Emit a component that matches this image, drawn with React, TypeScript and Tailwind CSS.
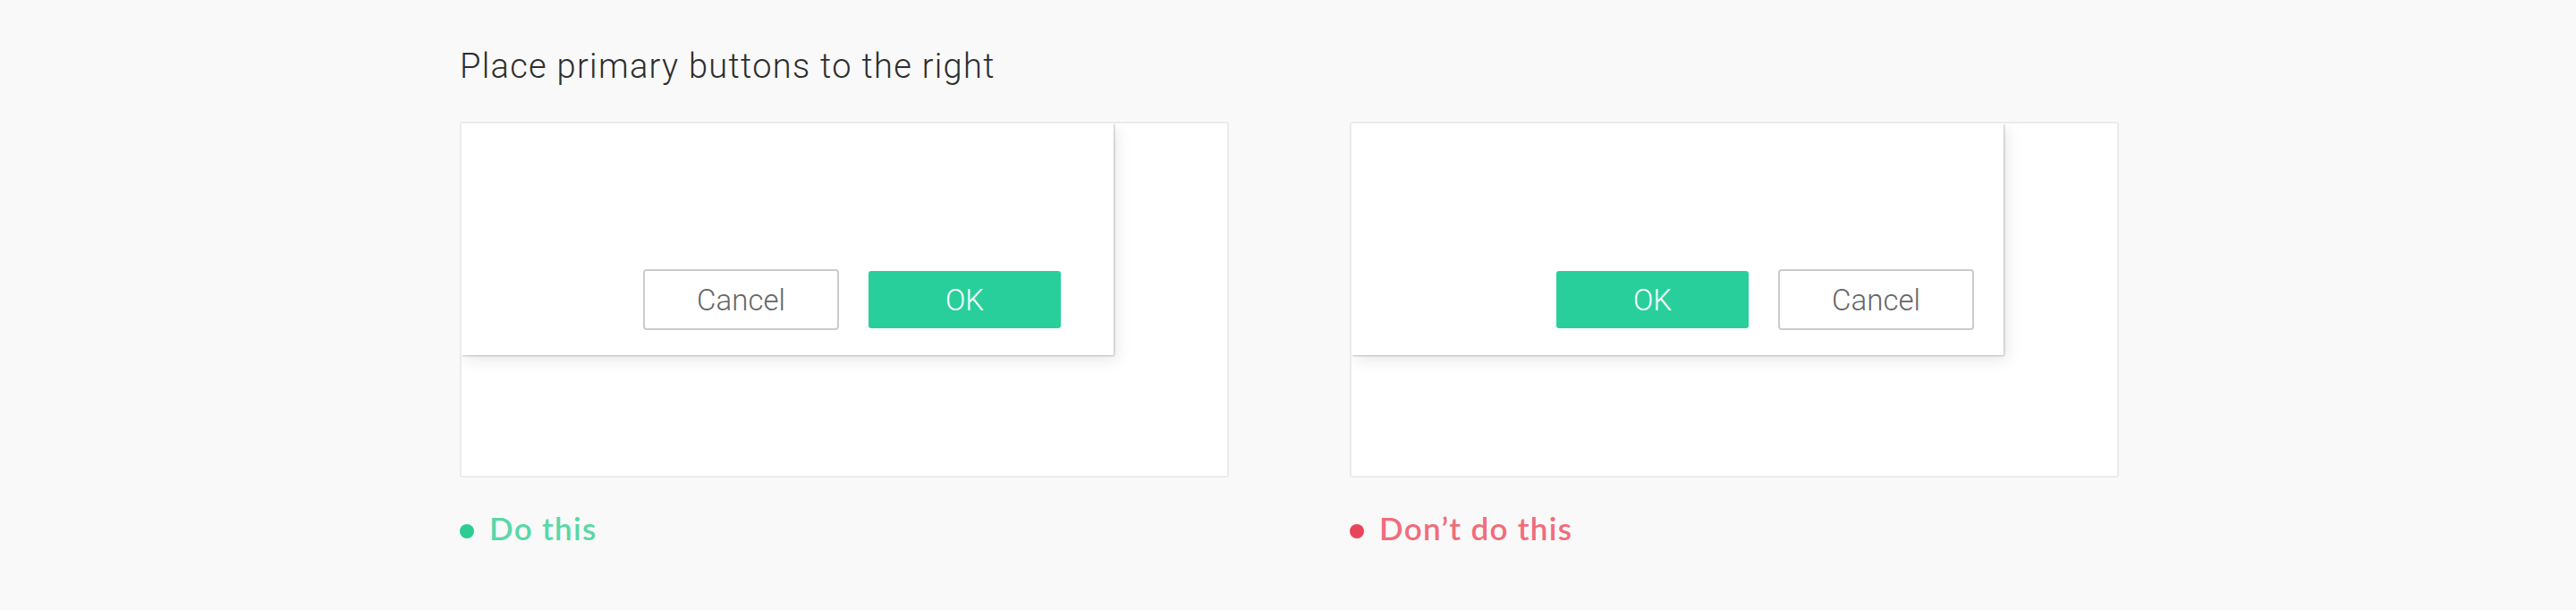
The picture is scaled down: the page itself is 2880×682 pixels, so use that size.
import React from "react";

function Dialog({ okFirst }: { okFirst: boolean }) {
  const cancel = (
    <div className="flex h-[68px] w-[219px] items-center justify-center rounded-[4px] border-2 border-[#cbcbcb] bg-white text-[33px] font-light leading-none text-[#666666]">
      Cancel
    </div>
  );
  const ok = (
    <div className="flex h-[64px] w-[215px] items-center justify-center rounded-[3px] bg-[#29cf9b] text-[33px] font-light leading-none text-white">
      OK
    </div>
  );
  return (
    <div className="flex h-[398px] w-[860px] overflow-hidden rounded-[3px] border-2 border-[#ebebeb] bg-white">
      <div
        className={
          "flex h-[259px] w-[729px] shrink-0 items-end justify-end bg-white pb-[28px] shadow-[1px_1px_2px_rgba(0,0,0,0.22),4px_6px_16px_rgba(0,0,0,0.09)] " +
          (okFirst ? "pr-[33px]" : "pr-[59px]")
        }
      >
        <div className="flex items-center gap-[33px]" style={{ fontFamily: "Roboto, 'Liberation Sans', sans-serif" }}>
          {okFirst ? ok : cancel}
          {okFirst ? cancel : ok}
        </div>
      </div>
    </div>
  );
}

function Label({ good }: { good: boolean }) {
  return (
    <div className="mt-[39px] flex items-center gap-[17px]">
      <div className={"mt-[6px] h-[16px] w-[16px] rounded-full " + (good ? "bg-[#2dcc93]" : "bg-[#e8455a]")} />
      <div
        className={"text-[35px] font-semibold leading-[35px] tracking-[1.3px] " + (good ? "text-[#5ad7a6]" : "text-[#f06d7b]")}
        style={{ fontFamily: "Lato, 'Open Sans', sans-serif" }}
      >
        {good ? "Do this" : "Don\u2019t do this"}
      </div>
    </div>
  );
}

export default function App() {
  return (
    <div className="h-[682px] w-full bg-[#f9f9f9] pl-[514px] pt-[55px]">
      <div
        className="text-[38px] font-light leading-[38px] tracking-[1.3px] text-[#2e2e2e]"
        style={{ fontFamily: "Roboto, 'Liberation Sans', sans-serif" }}
      >
        Place primary buttons to the right
      </div>
      <div className="mt-[43px] flex gap-[135px]">
        <div className="flex flex-col">
          <Dialog okFirst={false} />
          <Label good={true} />
        </div>
        <div className="flex flex-col">
          <Dialog okFirst={true} />
          <Label good={false} />
        </div>
      </div>
    </div>
  );
}
